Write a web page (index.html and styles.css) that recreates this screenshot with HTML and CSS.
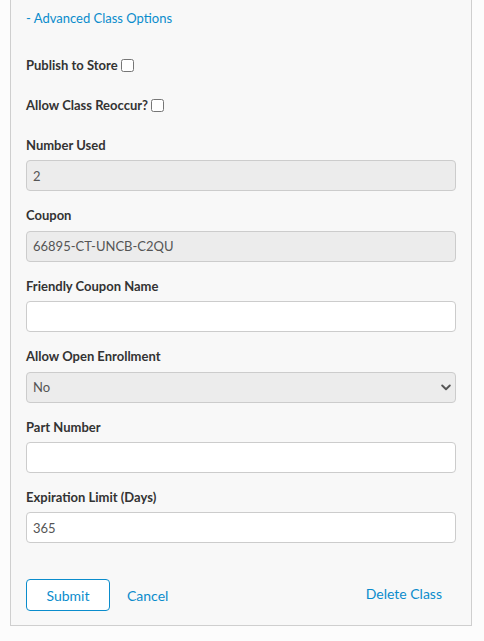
FILE: index.html
```html
<!DOCTYPE html>
<html>
<head>
<meta charset="utf-8">
<link rel="stylesheet" href="styles.css">
</head>
<body>
<div class="panel">
  <a class="toggle" href="#">- Advanced Class Options</a>

  <div class="check-row"><label>Publish to Store</label> <input type="checkbox"></div>
  <div class="check-row"><label>Allow Class Reoccur?</label><input type="checkbox"></div>

  <div class="group">
    <label>Number Used</label>
    <input class="field" type="text" value="2" disabled>
  </div>
  <div class="group">
    <label>Coupon</label>
    <input class="field" type="text" value="66895-CT-UNCB-C2QU" disabled>
  </div>
  <div class="group">
    <label>Friendly Coupon Name</label>
    <input class="field" type="text" value="">
  </div>
  <div class="group">
    <label>Allow Open Enrollment</label>
    <div class="select-wrap">
      <select class="field select"><option>No</option><option>Yes</option></select>
      <svg class="chev" width="10" height="7" viewBox="0 0 10 7"><path d="M1.2 1.5 L5 5.2 L8.8 1.5" fill="none" stroke="#555" stroke-width="1.9" stroke-linecap="round" stroke-linejoin="round"/></svg>
    </div>
  </div>
  <div class="group">
    <label>Part Number</label>
    <input class="field" type="text" value="">
  </div>
  <div class="group">
    <label>Expiration Limit (Days)</label>
    <input class="field" type="text" value="365">
  </div>

  <div class="actions">
    <div class="left">
      <button class="btn">Submit</button>
      <a class="link" href="#">Cancel</a>
    </div>
    <a class="link delete" href="#">Delete Class</a>
  </div>
</div>
</body>
</html>
```

FILE: styles.css
```css
html, body {
  margin: 0;
  padding: 0;
  background: #fcfcfc;
  font-family: Lato, "Open Sans", sans-serif;
  font-size: 13px;
  color: #333;
}
.panel {
  margin-left: 10px;
  width: 430px;
  background: #f8f8f8;
  border: 1px solid #cfcfcf;
  border-top: none;
  padding: 9px 15px 14px 15px;
}
.toggle {
  display: block;
  line-height: 18px;
  color: #0a8ccc;
  text-decoration: none;
  margin-bottom: 29px;
}
.check-row {
  display: flex;
  align-items: center;
  height: 18px;
  margin-bottom: 22px;
}
.check-row label {
  font-weight: bold;
  line-height: 18px;
}
.check-row input {
  margin: 0 0 0 3px;
  width: 13px;
  height: 13px;
}
.group {
  margin-bottom: 15px;
}
.group label {
  display: block;
  font-weight: bold;
  line-height: 18.4px;
  margin-bottom: 6px;
}
.field {
  display: block;
  box-sizing: border-box;
  width: 100%;
  height: 31px;
  border: 1px solid #cccccc;
  border-radius: 4px;
  background: #fff;
  padding: 0 6px;
  font-family: Lato, "Open Sans", sans-serif;
  font-size: 13px;
  color: #555;
  margin: 0;
}
.field:disabled {
  background: #ececec;
  color: #555;
  -webkit-text-fill-color: #555;
  opacity: 1;
}
.select-wrap {
  position: relative;
}
.select {
  appearance: none;
  -webkit-appearance: none;
  background: #ececec;
  padding-left: 6px;
}
.chev {
  position: absolute;
  right: 5px;
  top: 12px;
}
.actions {
  display: flex;
  justify-content: space-between;
  align-items: center;
  margin-top: 36px;
}
.left {
  display: flex;
  align-items: center;
}
.btn {
  box-sizing: border-box;
  width: 84px;
  height: 32px;
  background: #fff;
  border: 1px solid #0a8ccc;
  border-radius: 4px;
  color: #0a8ccc;
  font-family: Lato, "Open Sans", sans-serif;
  font-size: 14px;
  padding: 0;
  margin: 0 17px 0 0;
}
.link {
  color: #0a8ccc;
  text-decoration: none;
  font-size: 14px;
}
.delete {
  margin-right: 14px;
  margin-bottom: 4px;
}
```
